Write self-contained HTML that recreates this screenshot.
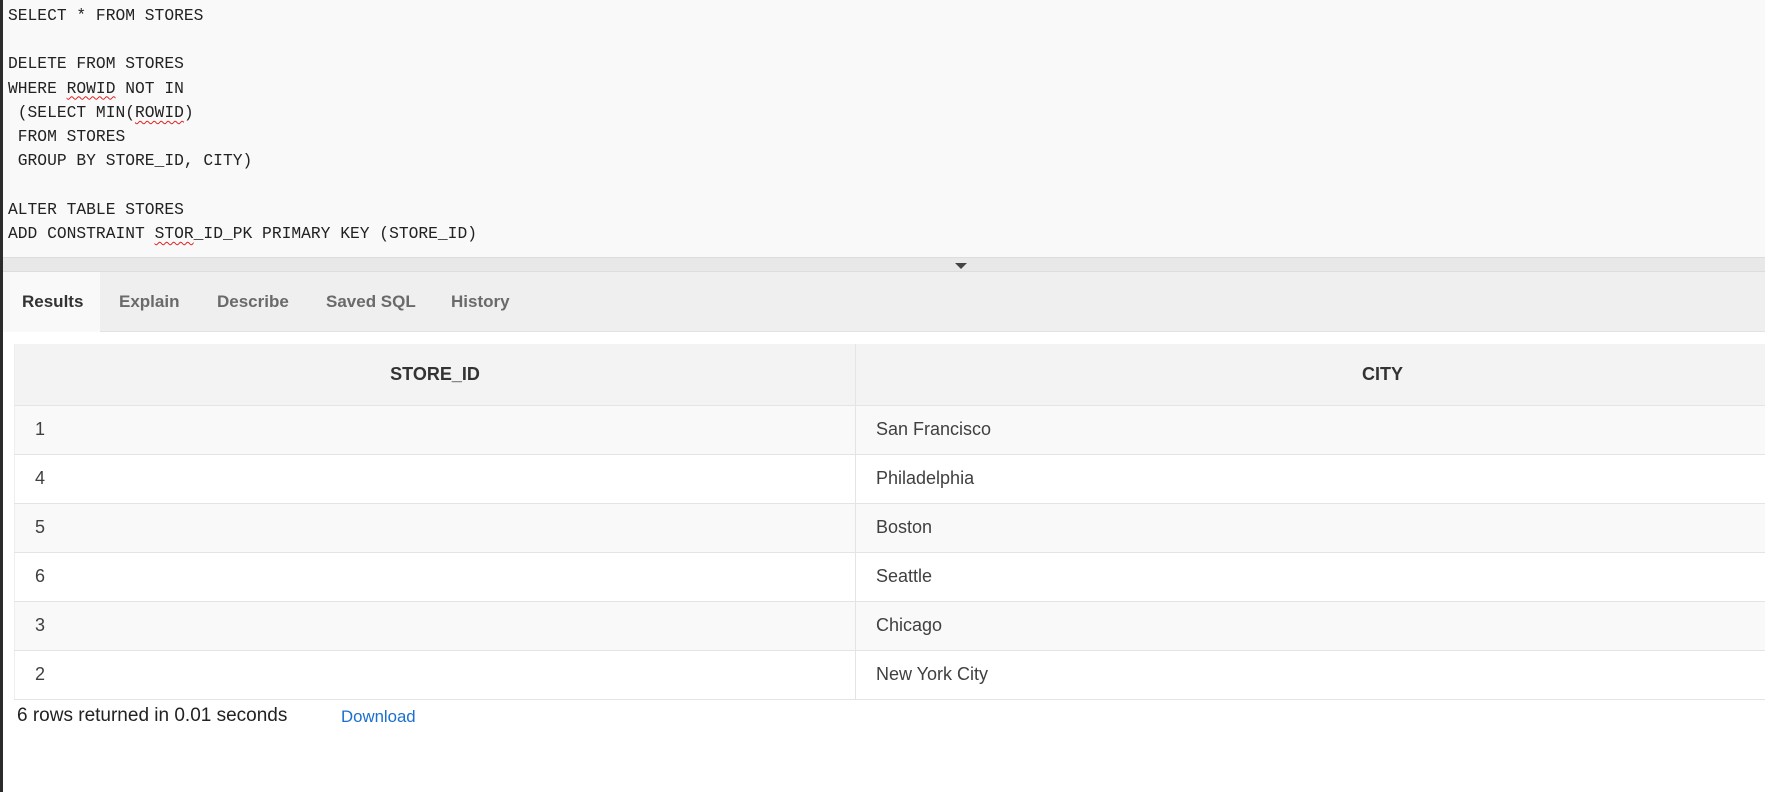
<!DOCTYPE html>
<html><head><meta charset="utf-8"><style>
*{margin:0;padding:0;box-sizing:border-box}
body{width:1765px;height:792px;background:#fff;position:relative;overflow:hidden;font-family:"Liberation Sans",sans-serif}
.lb{position:absolute;left:0;top:0;width:3px;height:792px;background:#2b2b2b;z-index:5}
.ed{position:absolute;left:3px;top:0;width:1762px;height:258px;background:#f9f9f9;border-bottom:1px solid #ddd}
.ed pre{position:absolute;left:5px;top:4px;font-family:"Liberation Mono",monospace;font-size:16.3px;line-height:24.2px;color:#222}
.sq{text-decoration:underline wavy #e02020;text-underline-offset:3px;text-decoration-thickness:1px}
.sp{position:absolute;left:3px;top:258px;width:1762px;height:14px;background:#e8e8e8;border-bottom:1px solid #ddd}
.ar{position:absolute;left:955px;top:263px;width:0;height:0;border-left:6px solid transparent;border-right:6px solid transparent;border-top:6px solid #444}
.tabs{position:absolute;left:3px;top:272px;width:1762px;height:60px;background:#efefef;border-bottom:1px solid #e2e2e2}
.tab{position:absolute;top:0;height:60px;line-height:60px;font-weight:bold;font-size:17px;color:#6a6a6a}
.act{left:0;width:97px;background:#f9f9f9;color:#333;padding-left:19px}
table{position:absolute;left:14px;top:344px;width:1896px;border-collapse:collapse;font-size:18px;color:#404040}
th{height:61px;background:#f3f3f3;font-weight:bold;color:#333;border-right:1px solid #e4e4e4;border-bottom:1px solid #e4e4e4;font-size:18px}
td{height:49px;padding-left:20px;border-bottom:1px solid #e4e4e4;border-right:1px solid #e4e4e4}
td:first-child,th:first-child{border-left:1px solid #eee;width:841px}
tr:nth-child(even) td{background:#f9f9f9}
.ft{position:absolute;top:705px;left:17px;font-size:19px;color:#222}
.dl{position:absolute;top:707px;left:341px;font-size:16.8px;color:#1a6fd0}
</style></head><body>
<div class="lb"></div>
<div class="ed"><pre>SELECT * FROM STORES

DELETE FROM STORES
WHERE <span class="sq">ROWID</span> NOT IN
 (SELECT MIN(<span class="sq">ROWID</span>)
 FROM STORES
 GROUP BY STORE_ID, CITY)

ALTER TABLE STORES
ADD CONSTRAINT <span class="sq">STOR</span>_ID_PK PRIMARY KEY (STORE_ID)</pre></div>
<div class="sp"></div><div class="ar"></div>
<div class="tabs">
<div class="tab act">Results</div>
<div class="tab" style="left:116px">Explain</div>
<div class="tab" style="left:214px">Describe</div>
<div class="tab" style="left:323px">Saved SQL</div>
<div class="tab" style="left:448px">History</div>
</div>
<table>
<tr><th>STORE_ID</th><th>CITY</th></tr>
<tr><td>1</td><td>San Francisco</td></tr>
<tr><td>4</td><td>Philadelphia</td></tr>
<tr><td>5</td><td>Boston</td></tr>
<tr><td>6</td><td>Seattle</td></tr>
<tr><td>3</td><td>Chicago</td></tr>
<tr><td>2</td><td>New York City</td></tr>
</table>
<div class="ft">6 rows returned in 0.01 seconds</div>
<div class="dl">Download</div>
</body></html>
